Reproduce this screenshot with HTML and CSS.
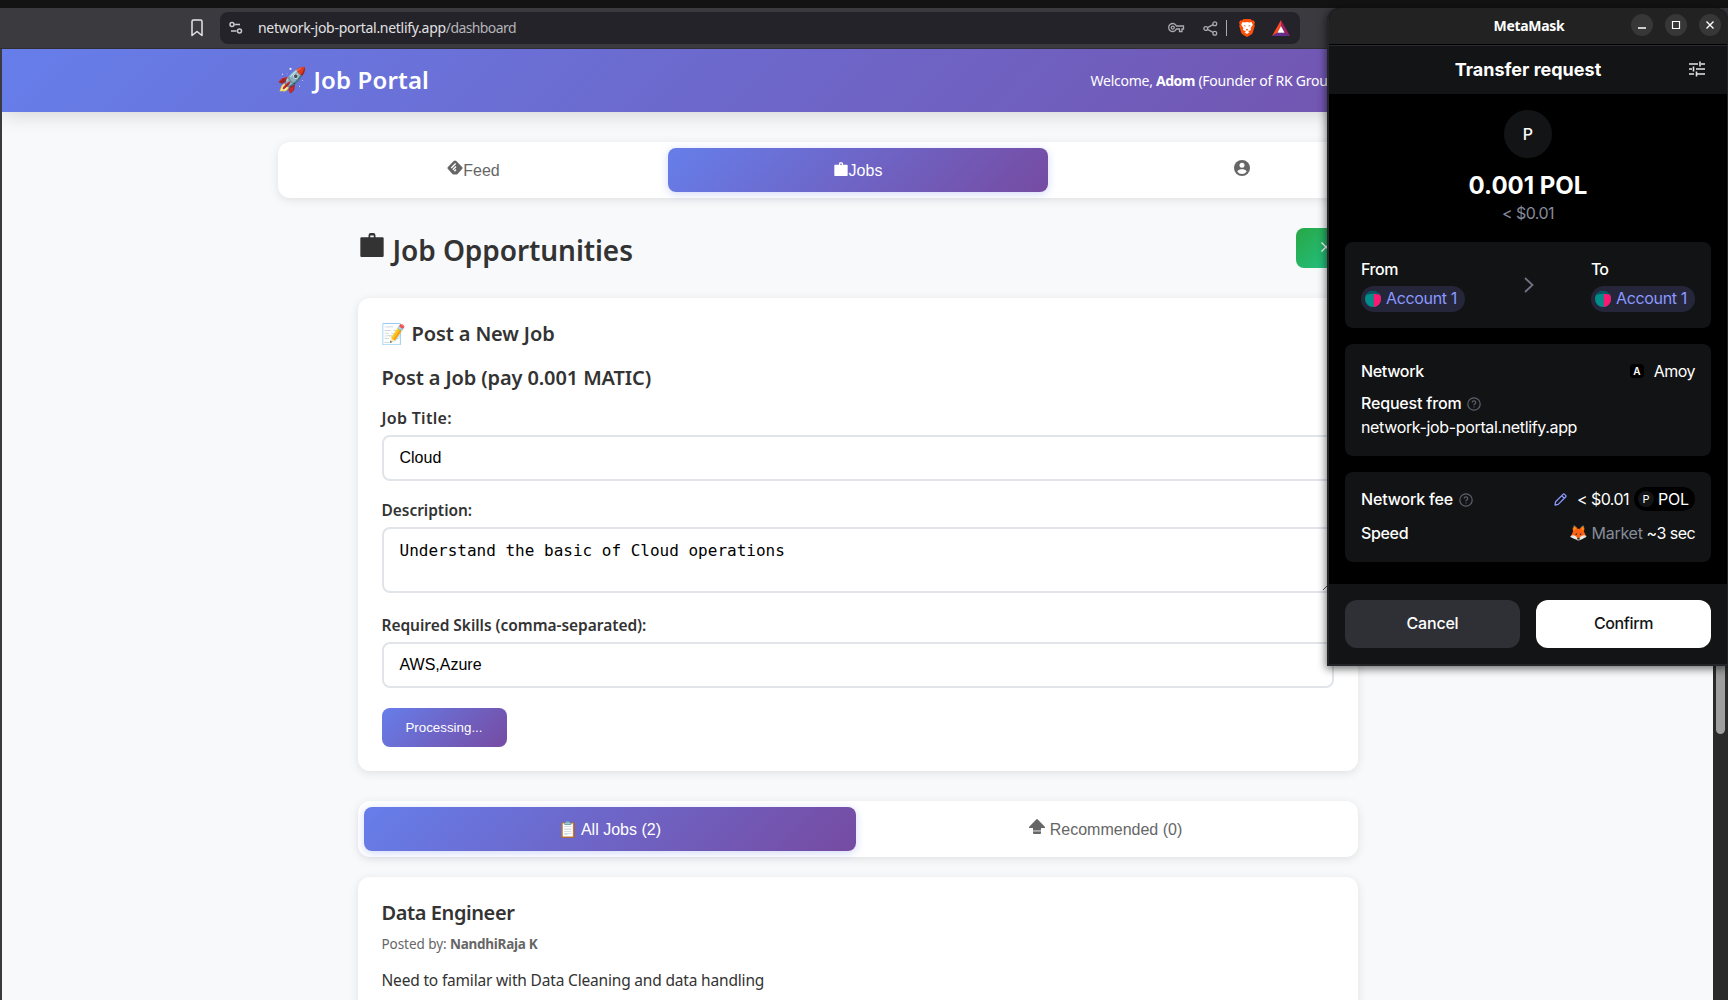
FILE: index.html
```html
<!DOCTYPE html>
<html lang="en">
<head>
<meta charset="utf-8">
<title>Job Portal</title>
<link rel="stylesheet" href="styles.css">
</head>
<body>
<svg class="defs" width="0" height="0">
  <symbol id="bag" viewBox="0 0 24 24"><path d="M2 8a1 1 0 0 1 1-1h6V5.500a2 2 0 0 1 2-2h2a2 2 0 0 1 2 2V7h6a1 1 0 0 1 1 1v15a1 1 0 0 1-1 1H3a1 1 0 0 1-1-1zM10.500 7h3V5.500h-3z" fill="currentColor" fill-rule="evenodd"/></symbol>
  <symbol id="help" viewBox="0 0 14 14"><circle cx="7" cy="7" r="6.200" fill="none" stroke="currentColor" stroke-width="1.200"/><path d="M5.300 5.600a1.700 1.700 0 1 1 2.600 1.400c-.6.400-.9.700-.9 1.300M7 9.500v1.100" fill="none" stroke="currentColor" stroke-width="1.200"/></symbol>
  <symbol id="avatar" viewBox="0 0 16 16"><clipPath id="round"><circle cx="8" cy="8" r="8"/></clipPath><g clip-path="url(#round)"><path d="M0 0h16v16H0z" fill="#018e8b"/><path d="M8.800 3H16v13H8.800z" fill="#fb1873"/><path d="M0 0h16v4l-7-1.500L0 4z" fill="#03555f"/></g></symbol>
</svg>
<header class="browser">
  <div class="strip"></div>
  <div class="toolbar">
    <svg class="bookmark" viewBox="0 0 12 18"><path d="M1 2.500Q1 1 2.500 1h7Q11 1 11 2.500V16.500L6 12.500 1 16.500z" fill="none" stroke="#e6e6e8" stroke-width="1.500" stroke-linejoin="round"/></svg>
    <div class="address">
      <svg class="tune" viewBox="0 0 14 14"><g fill="none" stroke="#c9c9cd" stroke-width="1.500"><circle cx="3" cy="3.500" r="2"/><path d="M5.500 3.500H11M2 10h5.500"/><circle cx="10.500" cy="10" r="2"/></g></svg>
      <span class="url">network-job-portal.netlify.app<span class="path">/dashboard</span></span>
      <div class="tools">
        <svg width="17" height="12" viewBox="0 0 17 12"><g fill="none" stroke="#a9a9ae" stroke-width="1.300"><path d="M8.400 4H15.500v3h-1.500v2.500h-2.500V7H8.400A4 4 0 1 1 8.400 4z"/><circle cx="4.800" cy="5.600" r="1.500"/></g></svg>
        <svg width="15" height="15" viewBox="0 0 15 15"><g fill="none" stroke="#a9a9ae" stroke-width="1.300"><circle cx="2.800" cy="7.500" r="1.900"/><circle cx="11.800" cy="2.800" r="1.900"/><circle cx="11.800" cy="12.200" r="1.900"/><path d="M4.500 6.600l5.600-2.900M4.500 8.400l5.600 2.900"/></g></svg>
        <i class="divider"></i>
        <svg width="16" height="18" viewBox="0 0 16 18"><path d="M4.500 0h7L13 1.500l1.500-.3L16 3.500l-.7 1.800.5 1.500-2 7Q13 15.500 8 18 3 15.500 2.200 13.800l-2-7 .5-1.500L0 3.500l1.500-2.300 1.500.3z" fill="#fb4f0a"/><path d="M3.500 3l2 .6L8 3l2.500.6 2-.6 1.300 2.800-2.300 3.400.7 1.800L9 12.300l1.500 1L8 15l-2.500-1.700 1.500-1L3.800 11l.7-1.800L2.200 5.800z" fill="#fff"/><path d="M4.300 6l2.500.8-.7.900zM11.700 6l-2.500.8.700.9zM6.500 11L8 11.600 9.500 11 8 9.800z" fill="#fb4f0a"/></svg>
        <svg width="18" height="16" viewBox="0 0 18 16"><path d="M9 0L0 16l5.500-3.300L9 6z" fill="#fd4a1e"/><path d="M9 0l9 16-5.500-3.300L9 6z" fill="#9e1f63"/><path d="M0 16h18l-5.500-3.300h-7z" fill="#662d91"/><path d="M9 6l3.600 6.700H5.400z" fill="#fff"/></svg>
      </div>
    </div>
  </div>
</header>
<div class="viewport">
  <div class="page">
    <header class="site-header">
      <div class="container head-row">
        <h1 class="brand"><span class="emoji">🚀</span>Job Portal</h1>
        <p class="welcome">Welcome, <b>Adom</b> (Founder of RK Group)</p>
      </div>
    </header>
    <main class="container">
      <nav class="tabs main-tabs">
        <a class="tab"><svg class="ico" viewBox="0 0 16 16"><path d="M8 .5Q8.700.500 9.300 1.100L15.300 7.300Q15.900 8 15.300 8.700L11 13.500Q10.500 14.500 9.500 14.500H6.500Q5.500 14.500 5 13.500L.7 8.700Q.1 8 .7 7.300L6.700 1.100Q7.300.500 8 .5z" fill="#666"/><path d="M8.600 3.600L4.300 7.900M9 6.600L5.900 9.700M9 9.600l-1.600 1.600" stroke="#fff" stroke-width="1.400"/></svg>Feed</a>
        <a class="tab active"><svg class="ico"><use href="#bag"/></svg>Jobs</a>
        <a class="tab"><svg class="ico person" viewBox="0 0 16 16"><circle cx="8" cy="8" r="8" fill="#666"/><circle cx="8" cy="5.300" r="2.500" fill="#fff"/><path d="M3.300 11.500C4.500 9.500 6 9.200 8 9.200s3.500.3 4.700 2.300C11.500 13.200 10 14 8 14s-3.500-.8-4.700-2.500z" fill="#fff"/></svg></a>
      </nav>
      <section class="content">
        <div class="title-row">
          <h2 class="title"><svg class="title-ico"><use href="#bag"/></svg>Job Opportunities</h2>
          <button class="close-form"><svg width="12" height="12" viewBox="0 0 12 12"><path d="M1.500 1.500l9 9M10.500 1.500l-9 9" stroke="#fff" stroke-width="1.300"/></svg></button>
        </div>
        <section class="card form">
          <h3 class="h3"><span class="emoji memo">📝</span>Post a New Job</h3>
          <h3 class="h3 second">Post a Job (pay 0.001 MATIC)</h3>
          <label class="label first">Job Title:</label>
          <div class="field">Cloud</div>
          <label class="label">Description:</label>
          <div class="field area">Understand the basic of Cloud operations<svg class="grip" width="9" height="9" viewBox="0 0 9 9"><path d="M0 9L9 0M5 9l4-4" stroke="#555" stroke-width="1"/></svg></div>
          <label class="label last">Required Skills (comma-separated):</label>
          <div class="field">AWS,Azure</div>
          <button class="submit">Processing...</button>
        </section>
        <nav class="tabs job-tabs">
          <a class="tab active"><span class="emoji clip">📋</span>All Jobs (2)</a>
          <a class="tab"><svg class="ico up" viewBox="0 0 16 16"><path d="M8 0q.4 0 .8.400L16 8v1h-4v2H4V9H0V8L7.200.400Q7.600 0 8 0z" fill="#666"/><path d="M4 11h8v1.500H4z" fill="#aaa"/><path d="M4 12.500h8V14q0 1-1 1H5q-1 0-1-1z" fill="#666"/></svg>Recommended (0)</a>
        </nav>
        <article class="card job">
          <h3 class="h3 job-name">Data Engineer</h3>
          <p class="meta">Posted by: <b>NandhiRaja K</b></p>
          <p class="desc">Need to familar with Data Cleaning and data handling</p>
        </article>
      </section>
    </main>
  </div>
  <div class="scrollbar"><i class="thumb"></i></div>
</div>

<aside class="wallet">
  <div class="titlebar"><span></span><span class="wtitle">MetaMask</span>
    <div class="wbtns">
      <i><svg viewBox="0 0 22 22"><path d="M7 14h8" stroke="#fff" stroke-width="1.300"/></svg></i>
      <i><svg viewBox="0 0 22 22"><path d="M7.500 7.500h7v7h-7z" fill="none" stroke="#fff" stroke-width="1.200"/></svg></i>
      <i><svg viewBox="0 0 22 22"><path d="M7.500 7.500l7 7M14.500 7.500l-7 7" stroke="#fff" stroke-width="1.400"/></svg></i>
    </div>
  </div>
  <div class="whead">Transfer request
    <svg class="sliders" viewBox="0 0 16 16"><path d="M0 3h9M12 3h4M0 8h3M7 8h9M0 13h5M8 13h8M11 .5v5M4.500 5.500v5M7.500 10.500v5" stroke="#e3e3e5" stroke-width="1.600"/></svg>
  </div>
  <div class="wbody">
    <div class="token">P</div>
    <div class="amount">0.001 POL</div>
    <div class="fiat usd">&lt; $0.01</div>
    <section class="wcard parties">
      <div><div class="k from">From</div><div class="pill"><svg width="16" height="16"><use href="#avatar"/></svg><span>Account 1</span></div></div>
      <svg class="chev" viewBox="0 0 10 16"><path d="M1 1l7.500 7L1 15" fill="none" stroke="#6d7383" stroke-width="1.800"/></svg>
      <div><div class="k to">To</div><div class="pill"><svg width="16" height="16"><use href="#avatar"/></svg><span>Account 1</span></div></div>
    </section>
    <section class="wcard net">
      <div class="row"><span class="k tight">Network</span><span class="grp"><i class="sq">A</i><span class="usd">Amoy</span></span></div>
      <div class="row"><span class="grp"><span class="k">Request from</span><svg class="help"><use href="#help"/></svg></span></div>
      <div class="row url-row">network-job-portal.netlify.app</div>
    </section>
    <section class="wcard fee">
      <div class="row"><span class="grp"><span class="k">Network fee</span><svg class="help"><use href="#help"/></svg></span>
        <span class="grp"><svg class="pencil" viewBox="0 0 13 13"><path d="M1 12l.6-3.200L9 1.400q.8-.8 1.600 0l1 1q.8.800 0 1.600L4.200 11.400zM7.800 2.800l2.400 2.400" fill="none" stroke="#8b99ff" stroke-width="1.300" stroke-linejoin="round"/></svg><span class="usd">&lt; $0.01</span><span class="chip"><i>P</i>POL</span></span></div>
      <div class="row"><span class="k tight">Speed</span><span class="grp"><span class="emoji fox">🦊</span><span class="muted">Market</span><span class="usd">~3 sec</span></span></div>
    </section>
  </div>
  <footer class="wfoot"><button class="cancel">Cancel</button><button class="confirm">Confirm</button></footer>
</aside>
</body>
</html>
```
FILE: styles.css
```css
* { box-sizing: border-box; }
body { margin: 0; width: 1728px; height: 1000px; overflow: hidden; position: relative; display: flex; flex-direction: column; background: #f8f9fa; color: #333; font-family: "Noto Sans", "Open Sans", sans-serif; }
h1, h2, h3, p { margin: 0; }
svg { display: block; flex: none; }
button { border: 0; padding: 0; }
i { font-style: normal; }
.defs { position: absolute; }
.emoji { font-family: "Noto Color Emoji", "DejaVu Sans", sans-serif; font-weight: 400; letter-spacing: 0; }

.browser { flex: none; }
.strip { height: 8px; background: #131313; }
.toolbar { height: 41px; padding: 4px 428px 4px 191px; display: flex; align-items: center; background: #3b3a3f; border-bottom: 1px solid #2f2e33; }
.bookmark { width: 12px; height: 18px; margin-right: 17px; }
.address { flex: 1; height: 32px; border-radius: 8px; background: #242329; display: flex; align-items: center; padding: 0 10px 0 9px; }
.tune { width: 14px; height: 14px; }
.url { flex: 1; margin-left: 15px; font-size: 14px; line-height: 20px; color: #e1e1e4; white-space: nowrap; letter-spacing: -.28px; }
.path { color: #b4b4b9; letter-spacing: -.6px; }
.tools { display: flex; align-items: center; }
.tools svg:nth-child(2) { margin-left: 18px; }
.divider { width: 1px; height: 16px; background: #a9a9ae; margin: 0 12px 0 8px; }
.tools svg:last-child { margin-left: 17px; }

.viewport { flex: 1; min-height: 0; display: flex; border-left: 2px solid #3b3a3f; }
.page { flex: 1; min-width: 0; overflow: hidden; background: #f8f9fb; }
.scrollbar { width: 15px; background: #2a2a2a; padding: 0 3px; }
.thumb { display: block; height: 685px; border-radius: 5px; background: #9f9f9f; }
.container { width: 1160px; margin: 0 auto; }
.site-header { height: 63px; background: linear-gradient(135deg, #667eea, #764ba2); box-shadow: 0 2px 20px rgba(0,0,0,.16); color: #fff; }
.head-row { height: 63px; display: flex; justify-content: space-between; align-items: center; }
.brand { display: flex; align-items: center; gap: 7px; font-size: 24px; font-weight: 600; line-height: 32px; padding-bottom: 2px; letter-spacing: .15px; white-space: nowrap; }
.brand .emoji { font-size: 24px; width: 29px; }
.welcome { width: 347px; font-size: 14px; line-height: 20px; letter-spacing: -.25px; white-space: nowrap; }
.welcome b { letter-spacing: -.5px; }

.tabs { display: flex; gap: 4px; padding: 6px; height: 56px; background: #fff; border-radius: 12px; box-shadow: 0 2px 10px rgba(0,0,0,.1); }
.main-tabs { margin-top: 30px; }
.tab { flex: 1; display: flex; align-items: center; justify-content: center; border-radius: 8px; padding-top: 2px; font: 16px/20px "Liberation Sans", sans-serif; color: #666; }
.tab.active { color: #fff; background: linear-gradient(135deg, #667eea, #764ba2); box-shadow: 0 2px 8px rgba(102,126,234,.3); }
.ico { width: 16px; height: 16px; margin-top: -6px; }
.active .ico { margin-top: -7px; }
.up { margin-right: 5px; }
.clip { margin-right: 3px; font-size: 16px; }
.content { width: 1000px; margin: 30px auto 0; }
.title-row { display: flex; justify-content: space-between; height: 40px; }
.title { display: flex; align-items: center; gap: 7px; padding-top: 3px; font-size: 28px; font-weight: 600; line-height: 40px; letter-spacing: -.08px; white-space: nowrap; }
.title-ico { width: 28px; height: 28px; margin-top: -13px; }
.close-form { width: 62px; border-radius: 8px; background: linear-gradient(135deg, #28a745, #20c997); display: flex; align-items: center; padding: 0 0 2px 24px; }
.card { background: #fff; border-radius: 12px; padding: 24px; box-shadow: 0 2px 10px rgba(0,0,0,.1); }
.form { margin-top: 30px; height: 473px; }
.h3 { display: flex; align-items: center; font-size: 20px; font-weight: 600; line-height: 24px; height: 24px; letter-spacing: -.12px; white-space: nowrap; }
.memo { width: 30px; font-size: 20px; }
.h3.second { margin: 20px 0 -1px; }
.job-name { letter-spacing: -.41px; }
.label { display: block; margin: 17px 0 5px; font-size: 15.500px; font-weight: 600; line-height: 24px; height: 24px; letter-spacing: -.04px; white-space: nowrap; }
.label.first { font-size: 16px; letter-spacing: .3px; }
.label.last { margin-top: 20px; }
.field { height: 46px; border: 2px solid #e1e5e9; border-radius: 8px; padding: 10px 16px; font: 16px/22px "Liberation Sans", sans-serif; color: #000; }
.area { position: relative; height: 66px; padding-top: 11px; font-family: "DejaVu Sans Mono", monospace; }
.grip { position: absolute; right: 0; bottom: 1px; }
.submit { display: block; width: 125px; height: 39px; margin-top: 20px; border-radius: 8px; background: linear-gradient(135deg, #667eea, #764ba2); font: 13.333px "Liberation Sans", sans-serif; color: #fff; }
.job-tabs { margin-top: 30px; }
.job { margin-top: 20px; height: 200px; }
.meta { margin-top: 8px; font-size: 13.500px; line-height: 22px; letter-spacing: -.06px; color: #666; white-space: nowrap; }
.meta b { letter-spacing: -.27px; }
.desc { margin-top: 12px; font-size: 15.500px; line-height: 26px; letter-spacing: -.18px; white-space: nowrap; }

.wallet { position: absolute; left: 1327px; top: 8px; width: 401px; height: 658px; display: flex; flex-direction: column; background: #000; border: solid #242528; border-width: 0 1px 2px 2px; border-radius: 12px 12px 0 0; box-shadow: 0 2px 8px 1px rgba(0,0,0,.55); color: #fff; font: 16px/24px Inter, sans-serif; overflow: hidden; white-space: nowrap; }
.titlebar { flex: none; height: 37px; background: #222; border-bottom: 1px solid #000; display: grid; grid-template-columns: 1fr auto 1fr; align-items: center; padding: 0 6px 2px 8px; }
.wtitle { padding-top: 1px; font: bold 14px/20px "Noto Sans", sans-serif; letter-spacing: -.29px; }
.wbtns { display: flex; gap: 12px; justify-content: flex-end; }
.wbtns i { width: 22px; height: 22px; border-radius: 50%; background: #373737; }
.whead { flex: none; height: 49px; border-top: 1px solid #2b2b2d; background: #121415; display: flex; align-items: center; justify-content: center; position: relative; font-size: 18px; font-weight: 700; }
.sliders { position: absolute; right: 22px; top: 15px; width: 16px; height: 16px; }
.wbody { flex: 1; padding: 16px 16px 0; }
.token { width: 48px; height: 48px; margin: 0 auto; border-radius: 50%; background: #131415; text-align: center; line-height: 48px; font-weight: 500; }
.amount { margin-top: 12px; text-align: center; font-size: 24px; line-height: 32px; font-weight: 700; }
.usd { letter-spacing: -.55px; }
.fiat { text-align: center; color: #858b9a; margin-top: -1px; }
.wcard { background: #121314; border-radius: 8px; padding: 15px 16px 16px; margin-bottom: 16px; letter-spacing: -.35px; }
.k { font-weight: 500; letter-spacing: -.18px; }
.k.tight { letter-spacing: -.34px; }
.k.from { letter-spacing: -.45px; }
.k.to { letter-spacing: -.9px; }
.parties { height: 86px; margin-top: 17px; display: flex; justify-content: space-between; align-items: flex-start; }
.pill { display: flex; align-items: center; gap: 5px; margin-top: 5px; height: 26px; width: 104px; padding-left: 4px; border-radius: 13px; background: #25263a; color: #8b99ff; }
.pill span { padding-bottom: 2px; }
.chev { width: 10px; height: 16px; margin: 20px -1px 0 0; }
.net { height: 112px; }
.row { display: flex; justify-content: space-between; align-items: center; height: 24px; }
.grp { display: flex; align-items: center; }
.net .row + .row { margin-top: 8px; }
.net .url-row.row { margin-top: 0; }
.sq { width: 14px; height: 14px; border-radius: 4px; background: #000; font-size: 10px; line-height: 14px; text-align: center; font-weight: 600; letter-spacing: 0; margin-right: 10px; }
.help { width: 14px; height: 14px; margin: 1px 0 0 6px; color: #5c606c; }
.fee { height: 90px; margin: 0; }
.fee .row + .row { margin-top: 10px; }
.pencil { width: 13px; height: 13px; margin: 1px 10px 0 0; }
.chip { display: flex; align-items: center; gap: 4px; margin-left: 5px; height: 24px; width: 61px; padding-left: 4px; border-radius: 12px; background: #000; letter-spacing: -.17px; }
.chip i { width: 16px; height: 16px; border-radius: 50%; background: #131415; font-size: 11px; line-height: 16px; text-align: center; }
.fox { font-size: 15px; margin-right: 4px; }
.muted { color: #858b9a; margin-right: 4px; letter-spacing: -.28px; }
.wfoot { flex: none; height: 80px; padding: 16px; display: flex; gap: 16px; background: #131415; }
.wfoot button { flex: 1; height: 48px; border-radius: 12px; padding-bottom: 2px; font: 500 16px/24px Inter, sans-serif; letter-spacing: -.2px; }
.cancel { background: #2f3036; color: #fff; }
.wfoot .confirm { background: #fff; color: #131415; letter-spacing: -.4px; }
```
